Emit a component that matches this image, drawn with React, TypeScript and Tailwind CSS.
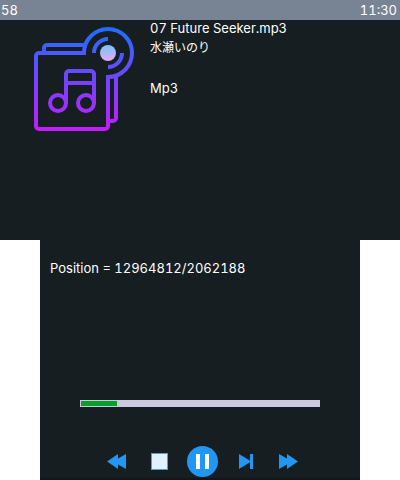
import React from "react";

const track = {
  file: "07 Future Seeker.mp3",
  artist: "水瀬いのり",
  format: "Mp3",
  position: 12964812,
  length: 2062188,
};

const progress = 15;

function AlbumArt() {
  return (
    <svg viewBox="34 27 100 104" className="h-[104px] w-[100px] shrink-0" fill="none" aria-hidden="true">
      <defs>
        <linearGradient id="line" gradientUnits="userSpaceOnUse" x1="0" y1="27" x2="0" y2="131">
          <stop offset="0" stopColor="#1f6eff" />
          <stop offset="1" stopColor="#c41cff" />
        </linearGradient>
        <linearGradient id="hub" x1="0" y1="0" x2="0" y2="1">
          <stop offset="0" stopColor="#74c4ff" />
          <stop offset="1" stopColor="#e6a8f6" />
        </linearGradient>
      </defs>
      <g stroke="url(#line)" strokeWidth="4">
        <path d="M108 77V126a3 3 0 0 1-3 3H39a3 3 0 0 1-3-3V56a3 3 0 0 1 3-3H84A24 24 0 1 1 108 77Z" />
        <path d="M44 52V48a3 3 0 0 1 3-3H84" />
        <path d="M116 76V118a3 3 0 0 1-3 3H109" />
        <path d="M94 53A14 14 0 0 1 108 39M122 53A14 14 0 0 1 108 67" />
        <circle cx="58" cy="103" r="8" />
        <circle cx="86" cy="103" r="8" />
        <path d="M66 103V74a3 3 0 0 1 3-3H91a3 3 0 0 1 3 3V103M66 83H94" />
      </g>
      <circle cx="108" cy="53" r="8" fill="url(#hub)" />
    </svg>
  );
}

function Control({ label, width, children }: { label: string; width: string; children: React.ReactNode }) {
  return (
    <button type="button" aria-label={label} className={`flex h-8 cursor-pointer items-center justify-center ${width}`}>
      {children}
    </button>
  );
}

export default function App() {
  return (
    <main className="bg-white font-['Inter','Noto_Sans_CJK_JP',sans-serif] text-[13px] leading-5 text-white tabular-nums">
      <section className="min-h-60 bg-[#161e21]">
        <header className="flex h-5 items-center justify-between bg-[#788493] px-px pr-[3px] leading-[18px]">
          <span>58</span>
          <time>11:30</time>
        </header>
        <div className="flex gap-4 pl-[34px]">
          <div className="pt-[7px]">
            <AlbumArt />
          </div>
          <div className="leading-4">
            <h1>{track.file}</h1>
            <p className="mt-1 text-xs leading-4">{track.artist}</p>
            <p className="mt-6">{track.format}</p>
          </div>
        </div>
      </section>

      <section className="mx-10 flex min-h-60 flex-col border-b-2 border-[#12161b] bg-[#161e21]">
        <p className="px-[10px] pt-[18px]">
          Position = {track.position}/{track.length}
        </p>
        <div
          role="progressbar"
          aria-label="Playback position"
          aria-valuenow={progress}
          aria-valuemin={0}
          aria-valuemax={100}
          className="mx-10 mt-auto h-[7px] bg-[#cbc9df] p-px"
        >
          <div className="h-full bg-[#05a02b]" style={{ width: `${progress}%` }} />
        </div>
        <div className="mt-[38px] flex items-center justify-center gap-[14px] pb-px pl-1.5">
          <Control label="Rewind" width="w-7">
            <svg viewBox="0 0 20 16" className="h-4 w-5" fill="#2196f3">
              <path d="M0 8.5L11 1V5.5L19 1V16L11 11.5V16Z" />
            </svg>
          </Control>
          <Control label="Stop" width="w-7">
            <span className="size-[17px] border border-[#5a9bd5] bg-[#e1f1ff]" />
          </Control>
          <Control label="Pause" width="w-8">
            <svg viewBox="0 0 32 32" className="size-8">
              <circle cx="15.5" cy="16.5" r="15.5" fill="#2196f3" />
              <path d="M9 9h4v15h-4zM18 9h4v15h-4z" fill="#fff" />
            </svg>
          </Control>
          <Control label="Next track" width="w-7">
            <svg viewBox="0 0 16 16" className="size-4" fill="#2196f3">
              <path d="M0 1L11 7.7V1H14V16H11V9.3L0 16Z" />
            </svg>
          </Control>
          <Control label="Fast forward" width="w-7">
            <svg viewBox="0 0 20 16" className="h-4 w-5" fill="#2196f3">
              <path d="M19 8.5L8 1V5.5L0 1V16L8 11.5V16Z" />
            </svg>
          </Control>
        </div>
      </section>
    </main>
  );
}
